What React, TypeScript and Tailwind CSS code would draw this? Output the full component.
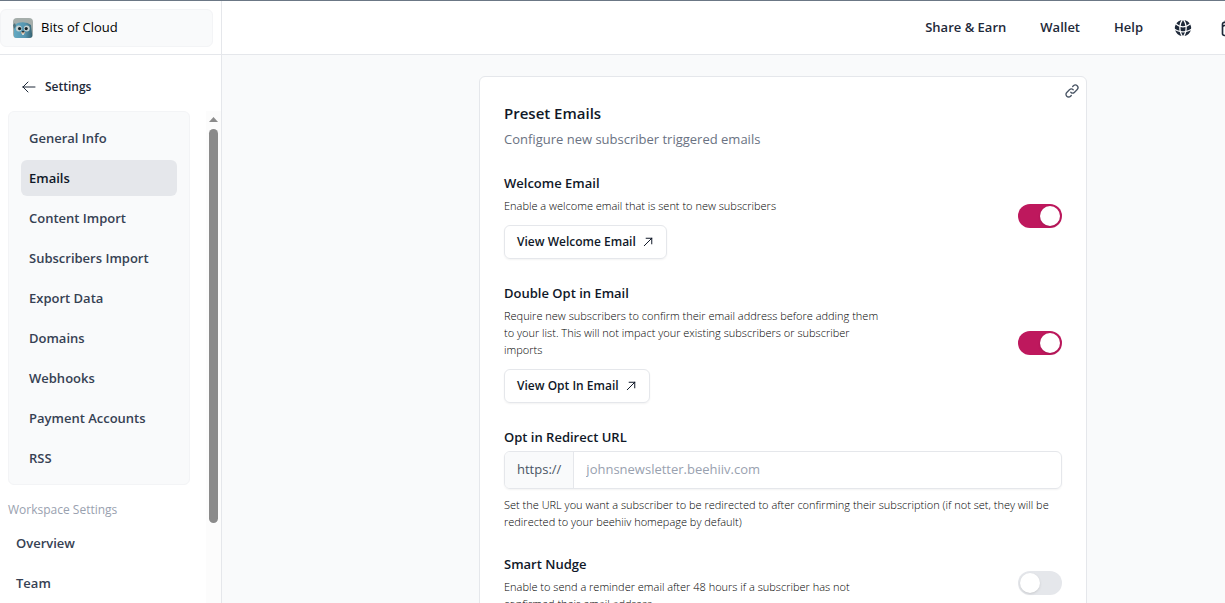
import type { ReactNode } from "react";
import { HiOutlineLink } from "react-icons/hi";
import { HiGlobeAlt, HiOutlineArrowLeft, HiOutlineArrowUpRight, HiOutlineCalendar } from "react-icons/hi2";

const publicationLinks = [
  "General Info",
  "Emails",
  "Content Import",
  "Subscribers Import",
  "Export Data",
  "Domains",
  "Webhooks",
  "Payment Accounts",
  "RSS",
];

const workspaceLinks = ["Overview", "Team"];

function Avatar() {
  return (
    <svg viewBox="0 0 20 20" className="size-5 shrink-0 rounded" aria-hidden="true">
      <defs>
        <linearGradient id="gopher" x1="0" x2="1">
          <stop offset="0" stopColor="#63a9c2" />
          <stop offset="0.6" stopColor="#5595b0" />
          <stop offset="1" stopColor="#35616f" />
        </linearGradient>
      </defs>
      <rect width="20" height="20" fill="#a5aeab" />
      <path d="M1 20V9Q2 5 7 4.500Q14 3.500 18 7L19.500 20Z" fill="url(#gopher)" />
      <path d="M0 7l2-2 1 3-2 3z" fill="#50737d" />
      <circle cx="5.800" cy="10.500" r="2.900" fill="#c6d2d2" />
      <circle cx="13.800" cy="10.500" r="2.900" fill="#c6d2d2" />
      <circle cx="6.600" cy="10.600" r="1.600" fill="#17242a" />
      <circle cx="13.200" cy="10.600" r="1.600" fill="#17242a" />
      <ellipse cx="10" cy="14.800" rx="2" ry="1.400" fill="#cfb398" />
      <ellipse cx="10" cy="13.600" rx="1.300" ry="0.900" fill="#2a3135" />
      <rect x="9.200" y="15.500" width="1.600" height="1.500" fill="#e8e8e2" />
    </svg>
  );
}

function Toggle({ label, on = false }: { label: string; on?: boolean }) {
  return (
    <input
      type="checkbox"
      role="switch"
      aria-label={label}
      defaultChecked={on}
      className="h-6 w-11 shrink-0 cursor-pointer appearance-none rounded-full bg-gray-200 p-0.5 before:block before:size-5 before:rounded-full before:bg-white before:shadow-sm checked:bg-[#be185d] checked:before:translate-x-5"
    />
  );
}

function Setting({
  title,
  description,
  on,
  action,
}: {
  title: string;
  description: string;
  on?: boolean;
  action?: string;
}) {
  return (
    <section className="flex items-center justify-between">
      <div>
        <h3 className="text-[13px] leading-5 font-semibold">{title}</h3>
        <Hint className="mt-1 max-w-96">{description}</Hint>
        {action && (
          <button
            type="button"
            className="mt-[11px] flex h-[34px] items-center gap-1.5 rounded-md border border-gray-200 px-3 text-[12px] font-semibold shadow-xs"
          >
            {action}
            <HiOutlineArrowUpRight className="size-3" strokeWidth={2} />
          </button>
        )}
      </div>
      <Toggle label={title} on={on} />
    </section>
  );
}

function Hint({ className, children }: { className: string; children: ReactNode }) {
  return <p className={`text-[11px] leading-[17px] font-light text-black ${className}`}>{children}</p>;
}

function Sidebar() {
  return (
    <aside className="flex w-[222px] shrink-0 flex-col border-r border-gray-200 bg-white">
      <div className="h-[54px] shrink-0 border-b border-gray-200 pt-2 pr-2">
        <button
          type="button"
          className="flex h-[38px] w-full items-center gap-2 rounded-md border border-gray-100 bg-gray-50 px-3 text-[13px] text-black"
        >
          <Avatar />
          Bits of Cloud
        </button>
      </div>
      <a href="#back" className="mt-[22px] mb-[14px] ml-[21px] flex h-5 items-center gap-2 text-[12px] font-semibold text-gray-800">
        <HiOutlineArrowLeft className="size-4" />
        Settings
      </a>
      <div className="flex min-h-0 flex-1">
        <nav className="min-w-0 flex-1 overflow-hidden pr-4 pl-2">
          <ul className="space-y-1 rounded-md border border-gray-100 bg-gray-50 px-3 py-2">
            {publicationLinks.map((name) => (
              <li key={name}>
                <a
                  href={`#${name}`}
                  aria-current={name === "Emails" ? "page" : undefined}
                  className="flex h-9 items-center rounded-md px-2 pt-0.5 text-[13px] font-semibold text-gray-700 aria-[current=page]:bg-gray-200 aria-[current=page]:text-gray-900"
                >
                  {name}
                </a>
              </li>
            ))}
          </ul>
          <h2 className="mt-4 text-[12px] leading-[18px] text-gray-400">Workspace Settings</h2>
          <ul className="mt-1.5 space-y-1">
            {workspaceLinks.map((name) => (
              <li key={name}>
                <a href={`#${name}`} className="flex h-9 items-center px-2 pt-0.5 text-[13px] font-semibold text-gray-700">
                  {name}
                </a>
              </li>
            ))}
          </ul>
        </nav>
        <div className="flex w-[15px] flex-col items-center gap-[7px] bg-[#fcfcfc] pt-1.5" aria-hidden="true">
          <svg viewBox="0 0 9 5" className="h-[5px] w-[9px] shrink-0">
            <path d="M4.500 0L9 5H0Z" fill="#8b8b8b" />
          </svg>
          <div className="h-[81%] w-[9px] rounded-full bg-[#8b8b8b]" />
        </div>
      </div>
    </aside>
  );
}

export default function App() {
  return (
    <div className="flex h-screen overflow-hidden border-t border-[#6b7785] font-['Open_Sans',sans-serif] text-gray-900">
      <Sidebar />
      <div className="flex min-w-[1122px] flex-1 flex-col bg-gray-50">
        <header className="flex h-[54px] shrink-0 items-center justify-end gap-[30px] border-b border-gray-200 bg-white pr-[104px] text-[13px] font-semibold text-gray-800">
          <nav className="flex gap-[34px]">
            <a href="#share">Share &amp; Earn</a>
            <a href="#wallet">Wallet</a>
            <a href="#help">Help</a>
          </nav>
          <div className="flex items-center gap-[27px]">
            <button type="button" aria-label="Language">
              <HiGlobeAlt className="size-5" />
            </button>
            <button type="button" aria-label="Calendar">
              <HiOutlineCalendar className="size-5" strokeWidth={2} />
            </button>
          </div>
        </header>
        <main className="min-h-0 flex-1 overflow-hidden pt-[21px]">
          <div className="relative mx-auto w-full max-w-[608px] space-y-6 rounded-md border border-gray-200 bg-white p-6">
            <a href="#preset-emails" aria-label="Copy link to Preset Emails" className="absolute top-1.5 right-1.5 text-gray-600">
              <HiOutlineLink className="size-4" />
            </a>
            <div>
              <h2 className="text-[15px] leading-6 font-semibold">Preset Emails</h2>
              <p className="mt-1 text-[13px] leading-5 text-gray-500">Configure new subscriber triggered emails</p>
            </div>
            <Setting
              title="Welcome Email"
              description="Enable a welcome email that is sent to new subscribers"
              action="View Welcome Email"
              on
            />
            <Setting
              title="Double Opt in Email"
              description="Require new subscribers to confirm their email address before adding them to your list. This will not impact your existing subscribers or subscriber imports"
              action="View Opt In Email"
              on
            />
            <section>
              <label htmlFor="redirect-url" className="block text-[13px] leading-5 font-semibold">
                Opt in Redirect URL
              </label>
              <div className="mt-1 flex h-[38px] overflow-hidden rounded-md border border-gray-200 text-[13px] shadow-xs">
                <span className="flex items-center border-r border-gray-200 bg-gray-50 px-3 text-gray-600">https://</span>
                <input
                  id="redirect-url"
                  type="text"
                  placeholder="johnsnewsletter.beehiiv.com"
                  className="min-w-0 flex-1 px-3 outline-none placeholder:text-gray-400"
                />
              </div>
              <Hint className="mt-[7px]">
                Set the URL you want a subscriber to be redirected to after confirming their subscription (if not set, they will be
                redirected to your beehiiv homepage by default)
              </Hint>
            </section>
            <Setting
              title="Smart Nudge"
              description="Enable to send a reminder email after 48 hours if a subscriber has not confirmed their email address"
            />
          </div>
        </main>
      </div>
    </div>
  );
}
